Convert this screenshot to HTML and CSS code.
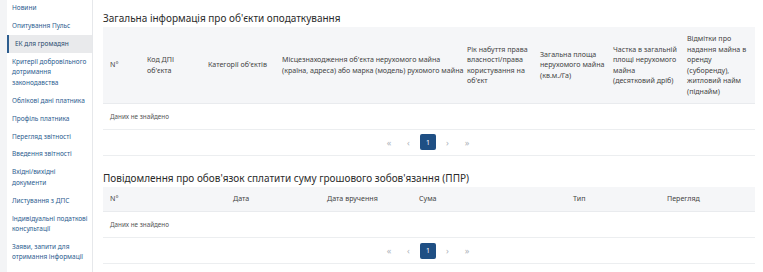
FILE: index.html
```html
<!DOCTYPE html>
<html lang="uk">
<head>
  <meta charset="UTF-8" />
  <title>Електронний кабінет</title>
  <link rel="stylesheet" href="styles.css">
</head>
<body>
  <div class="page">
    <nav class="sidebar">
      <a class="nav-item">Новини</a>
      <a class="nav-item">Опитування Пульс</a>
      <a class="nav-item active">ЕК для громадян</a>
      <a class="nav-item">Критерії добровільного дотримання законодавства</a>
      <a class="nav-item">Облікові дані платника</a>
      <a class="nav-item">Профіль платника</a>
      <a class="nav-item">Перегляд звітності</a>
      <a class="nav-item">Введення звітності</a>
      <a class="nav-item">Вхідні/вихідні документи</a>
      <a class="nav-item">Листування з ДПС</a>
      <a class="nav-item">Індивідуальні податкові консультації</a>
      <a class="nav-item">Заяви, запити для отримання інформації</a>
      <a class="nav-item">Стан розрахунків з бюджетом</a>
    </nav>

    <main class="content">
      <section class="block">
        <h2 class="block-title">Загальна інформація про об'єкти оподаткування</h2>
        <table class="grid grid-objects">
          <colgroup>
            <col style="width:37px"><col style="width:61px"><col style="width:74px"><col style="width:185px">
            <col style="width:73px"><col style="width:73px"><col style="width:74px"><col>
          </colgroup>
          <thead>
            <tr>
              <th>N°</th>
              <th>Код ДПІ<br>об'єкта</th>
              <th>Категорії об'єктів</th>
              <th>Місцезнаходження об'єкта нерухомого майна<br>(країна, адреса) або марка (модель) рухомого майна</th>
              <th>Рік набуття права<br>власності/права<br>користування на<br>об'єкт</th>
              <th>Загальна площа<br>нерухомого майна<br>(кв.м./Га)</th>
              <th>Частка в загальній<br>площі нерухомого<br>майна<br>(десятковий дріб)</th>
              <th>Відмітки про<br>надання майна в<br>оренду<br>(суборенду),<br>житловий найм<br>(піднайм)</th>
            </tr>
          </thead>
          <tbody>
            <tr><td colspan="8" class="empty">Даних не знайдено</td></tr>
          </tbody>
        </table>
        <div class="pager">
          <span class="pg">&laquo;</span>
          <span class="pg">&lsaquo;</span>
          <span class="pg current">1</span>
          <span class="pg">&rsaquo;</span>
          <span class="pg">&raquo;</span>
        </div>
      </section>

      <section class="block">
        <h2 class="block-title">Повідомлення про обов'язок сплатити суму грошового зобов'язання (ППР)</h2>
        <table class="grid grid-ppr">
          <colgroup>
            <col style="width:123px"><col style="width:94px"><col style="width:92px">
            <col style="width:154px"><col style="width:94px"><col>
          </colgroup>
          <thead>
            <tr>
              <th>N°</th>
              <th>Дата</th>
              <th>Дата вручення</th>
              <th>Сума</th>
              <th>Тип</th>
              <th>Перегляд</th>
            </tr>
          </thead>
          <tbody>
            <tr><td colspan="6" class="empty">Даних не знайдено</td></tr>
          </tbody>
        </table>
        <div class="pager">
          <span class="pg">&laquo;</span>
          <span class="pg">&lsaquo;</span>
          <span class="pg current">1</span>
          <span class="pg">&rsaquo;</span>
          <span class="pg">&raquo;</span>
        </div>
      </section>
    </main>
  </div>
</body>
</html>
```

FILE: styles.css
```css
* {
  box-sizing: border-box;
}

body {
  margin: 0;
  font-family: 'Noto Sans', sans-serif;
  background: #f3f4f6;
  color: #333;
  overflow: hidden;
}

.page {
  display: flex;
  height: 272px;
  padding-left: 7px;
}

.sidebar {
  width: 86px;
  flex-shrink: 0;
  background: #fff;
  border-right: 1px solid #e6e8eb;
  display: flex;
  flex-direction: column;
  overflow: hidden;
}

.nav-item {
  display: block;
  flex-shrink: 0;
  font-size: 6.5px;
  line-height: 10.5px;
  color: #2c5d8f;
  padding: 3.7px 4px 3.7px 5px;
}

.nav-item:first-child {
  padding-top: 3.3px;
}

.nav-item.active {
  background: #e9eaec;
  border-left: 2px solid #2c5d8f;
  padding: 4px 4px 3.4px 6px;
  color: #2a4a6e;
}

.content {
  flex: 1;
  background: #fff;
  padding: 8px 8px 0 10px;
}

.block-title {
  font-size: 10px;
  font-weight: 400;
  color: #2b2b2b;
  margin: 0;
  line-height: 14px;
  padding: 3px 0 2px;
}

.block + .block {
  margin-top: 12px;
}

.grid {
  width: 100%;
  border-collapse: collapse;
  table-layout: fixed;
}

.grid th {
  background: #f5f6f8;
  font-size: 7.1px;
  font-weight: 400;
  color: #444;
  text-align: left;
  line-height: 10.6px;
  padding: 3px 1px 3px 7px;
  white-space: nowrap;
  border-bottom: 1px solid #e9ebee;
}

.grid-objects th {
  height: 76px;
}

.grid-ppr th {
  height: 25px;
}

.grid td {
  font-size: 6.3px;
  color: #555;
  padding: 0 7px;
  height: 26px;
  border-bottom: 1px solid #eceef0;
}

.pager {
  display: flex;
  justify-content: center;
  align-items: center;
  gap: 3.5px;
  height: 26px;
  border-bottom: 1px solid #eceef0;
  padding-right: 2px;
}

.pg {
  width: 16px;
  height: 16px;
  display: flex;
  align-items: center;
  justify-content: center;
  font-size: 9px;
  color: #aeb3ba;
}

.pg.current {
  background: #1f4f84;
  color: #fff;
  border-radius: 2px;
  font-size: 7px;
}
```
